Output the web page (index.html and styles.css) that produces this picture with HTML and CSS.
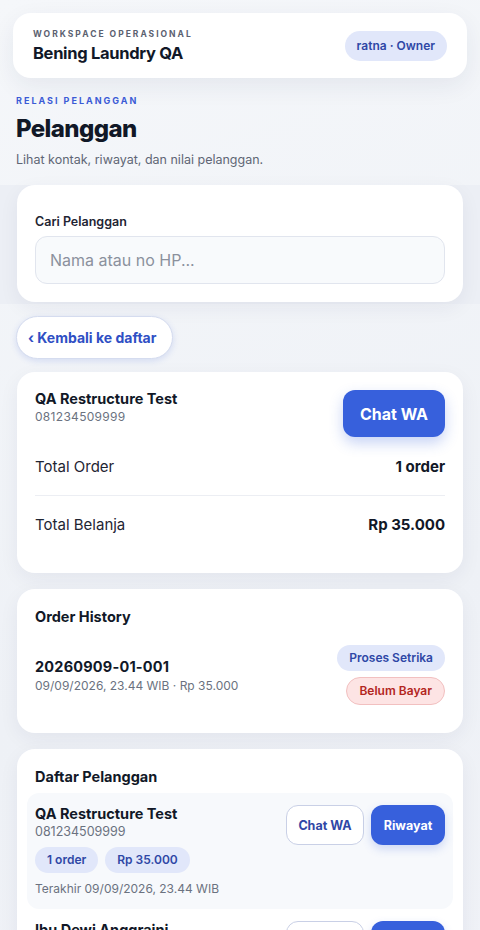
FILE: index.html
```
<html>
	<head>
		<meta name="viewport" content="width=device-width, initial-scale=1">
		<meta charset=utf-8>
		<link rel="stylesheet" href="styles.css">
		<title>Pelanggan</title>
	</head>
	<body>
		<div class="topbar">
			<div>
				<div class="ws-label">WORKSPACE OPERASIONAL</div>
				<div class="ws-name">Bening Laundry QA</div>
			</div>
			<span class="pill">ratna · Owner</span>
		</div>

		<div class="page-head">
			<div class="eyebrow">RELASI PELANGGAN</div>
			<h1>Pelanggan</h1>
			<p class="sub">Lihat kontak, riwayat, dan nilai pelanggan.</p>
		</div>

		<div class="search-band">
			<div class="card search-card">
				<label class="lbl" for="q">Cari Pelanggan</label>
				<input id="q" type="text" placeholder="Nama atau no HP...">
			</div>
		</div>

		<div class="content">
			<button class="back">‹ Kembali ke daftar</button>

			<div class="card detail">
				<div class="detail-top">
					<div>
						<div class="name">QA Restructure Test</div>
						<div class="phone">081234509999</div>
					</div>
					<button class="btn-big">Chat WA</button>
				</div>
				<div class="stat">
					<span>Total Order</span>
					<b>1 order</b>
				</div>
				<div class="stat">
					<span>Total Belanja</span>
					<b>Rp 35.000</b>
				</div>
			</div>

			<div class="card history">
				<div class="card-title">Order History</div>
				<div class="order">
					<div>
						<div class="order-id">20260909-01-001</div>
						<div class="order-meta">09/09/2026, 23.44 WIB · Rp 35.000</div>
					</div>
					<div class="order-tags">
						<span class="pill">Proses Setrika</span>
						<span class="pill red">Belum Bayar</span>
					</div>
				</div>
			</div>

			<div class="card list">
				<div class="card-title">Daftar Pelanggan</div>
				<div class="item active">
					<div>
						<div class="name">QA Restructure Test</div>
						<div class="item-phone">081234509999</div>
						<div class="item-tags">
							<span class="pill">1 order</span>
							<span class="pill">Rp 35.000</span>
						</div>
						<div class="last">Terakhir 09/09/2026, 23.44 WIB</div>
					</div>
					<div class="actions">
						<button class="btn-out">Chat WA</button>
						<button class="btn-fill">Riwayat</button>
					</div>
				</div>
				<div class="item">
					<div>
						<div class="name">Ibu Dewi Anggraini</div>
						<div class="item-phone">081298761234</div>
						<div class="item-tags">
							<span class="pill">3 order</span>
							<span class="pill">Rp 120.000</span>
						</div>
						<div class="last">Terakhir 08/09/2026, 10.12 WIB</div>
					</div>
					<div class="actions">
						<button class="btn-out">Chat WA</button>
						<button class="btn-fill">Riwayat</button>
					</div>
				</div>
			</div>
		</div>
	</body>
</html>
```

FILE: styles.css
```
*{
	box-sizing: border-box;
}
body{
	margin: 0;
	font-family: Inter, "Noto Sans", sans-serif;
	color: #111827;
	background: linear-gradient(160deg, #f5f7fa 0%, #eef1f6 60%, #f0f2f7 100%);
	min-height: 930px;
}
.card{
	background: #fff;
	border-radius: 18px;
	box-shadow: 0 6px 20px rgba(30, 41, 80, 0.06);
}
.pill{
	display: inline-block;
	background: #e1e7fa;
	color: #2f47a6;
	font-size: 12px;
	font-weight: 600;
	line-height: 16px;
	padding: 5px 12px;
	border-radius: 999px;
	white-space: nowrap;
}
.pill.red{
	background: #fde4e4;
	color: #b3261e;
	border: 1px solid #f2c0c0;
	padding: 4px 11px;
}

/* шапка */
.topbar{
	margin: 13px 13px 0;
	height: 65px;
	background: #fff;
	border-radius: 18px;
	box-shadow: 0 8px 24px rgba(30, 41, 80, 0.07);
	padding: 0 20px;
	display: flex;
	align-items: center;
	justify-content: space-between;
}
.topbar .pill{
	padding: 7px 12px;
}
.ws-label{
	font-size: 8.5px;
	font-weight: 700;
	letter-spacing: 2px;
	color: #5b6170;
	line-height: 12px;
}
.ws-name{
	font-size: 16.5px;
	font-weight: 700;
	letter-spacing: -0.3px;
	line-height: 22px;
	margin-top: 2px;
}

.page-head{
	padding: 17px 16px 0;
}
.eyebrow{
	font-size: 9px;
	font-weight: 700;
	letter-spacing: 2px;
	color: #3b5bd6;
	line-height: 12px;
}
h1{
	margin: 7px 0 0;
	font-size: 24px;
	font-weight: 800;
	letter-spacing: -0.6px;
	line-height: 30px;
}
.sub{
	margin: 8px 0 0;
	font-size: 12.5px;
	color: #5f6675;
	line-height: 16px;
}

/* поиск */
.search-band{
	margin-top: 17px;
	padding: 0 17px 2px;
	background: #eceff5;
}
.search-card{
	padding: 29px 18px 18px;
}
.lbl{
	display: block;
	font-size: 12.5px;
	font-weight: 600;
	color: #1f2533;
	line-height: 16px;
	margin-bottom: 6px;
}
input[type=text]{
	width: 100%;
	height: 48px;
	border: 1px solid #e1e5ee;
	border-radius: 12px;
	background: #f8fafc;
	padding: 0 14px;
	font-family: inherit;
	font-size: 16px;
	color: #111827;
	outline: none;
}
input::placeholder{
	color: #8b919d;
}

.content{
	padding: 12px 17px 0;
}
button{
	font-family: inherit;
	cursor: pointer;
}
.back{
	height: 43px;
	margin-left: -1px;
	padding: 0 16px 0 11px;
	border-radius: 999px;
	border: 1px solid #d5dcef;
	background: #fff;
	color: #2f4fc4;
	font-size: 14px;
	font-weight: 700;
	box-shadow: 0 2px 6px rgba(59, 95, 219, 0.16);
}

/* карточка клиента */
.detail{
	margin-top: 13px;
	padding: 18px 18px 20px;
}
.detail-top{
	display: flex;
	justify-content: space-between;
	align-items: flex-start;
}
.name{
	font-size: 14.5px;
	font-weight: 700;
	line-height: 18px;
}
.phone{
	font-size: 12px;
	color: #6b7280;
	line-height: 15px;
	margin-top: 1px;
	letter-spacing: 0.3px;
}
.btn-big{
	width: 102px;
	height: 47px;
	border: 0;
	border-radius: 12px;
	background: #3760dc;
	color: #fff;
	font-size: 16px;
	font-weight: 700;
	box-shadow: 0 6px 14px rgba(55, 96, 220, 0.28);
}
.stat{
	display: flex;
	justify-content: space-between;
	font-size: 15px;
	line-height: 20px;
	padding: 20px 0 18px;
	color: #1f2533;
}
.stat + .stat{
	border-top: 1px solid #eceef3;
	padding: 19px 0 18px;
}
.stat b{
	color: #111827;
}

/* история */
.history{
	margin-top: 16px;
	padding: 18px 18px 28px;
}
.card-title{
	font-size: 14.5px;
	font-weight: 700;
	line-height: 20px;
}
.order{
	margin-top: 18px;
	display: flex;
	justify-content: space-between;
	align-items: center;
}
.order-id{
	font-size: 14.5px;
	font-weight: 700;
	line-height: 18px;
	letter-spacing: 0.2px;
}
.order-meta{
	font-size: 12px;
	color: #6b7280;
	line-height: 15px;
	margin-top: 2px;
}
.order-tags{
	display: flex;
	flex-direction: column;
	align-items: flex-end;
	gap: 6px;
}
.order-tags .pill{
	padding: 5px 12px;
}

/* список */
.list{
	margin-top: 16px;
	padding: 18px 10px 10px;
}
.list .card-title{
	padding: 0 8px;
}
.item{
	margin-top: 6px;
	display: flex;
	justify-content: space-between;
	align-items: flex-start;
	padding: 12px 8px;
	border-radius: 12px;
}
.item + .item{
	margin-top: 0;
}
.item.active{
	background: #f7f9fc;
}
.item .name{
	font-size: 14.5px;
	line-height: 18px;
}
.item-phone{
	font-size: 12.5px;
	color: #6b7280;
	line-height: 16px;
	margin-top: 1px;
}
.item-tags{
	margin-top: 7px;
	display: flex;
	gap: 7px;
}
.item-tags .pill{
	padding: 5px 12px;
}
.last{
	margin-top: 8px;
	font-size: 12px;
	color: #6b7280;
	line-height: 16px;
}
.actions{
	display: flex;
	gap: 7px;
}
.btn-out, .btn-fill{
	height: 40px;
	border-radius: 12px;
	font-size: 12.5px;
	font-weight: 700;
}
.btn-out{
	width: 78px;
	border: 1px solid #c9d0e6;
	background: #fff;
	color: #2f47a6;
}
.btn-fill{
	width: 74px;
	border: 0;
	background: #3760dc;
	color: #fff;
	box-shadow: 0 4px 10px rgba(55, 96, 220, 0.22);
}
```
